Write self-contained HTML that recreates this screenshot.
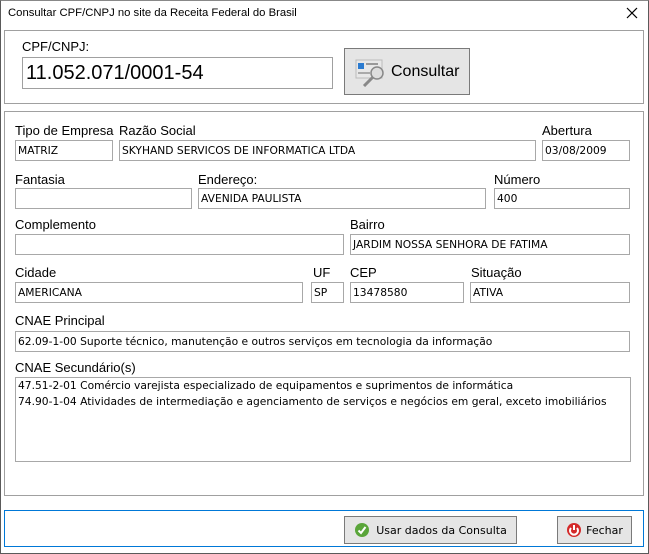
<!DOCTYPE html>
<html><head><meta charset="utf-8"><style>
*{margin:0;padding:0;box-sizing:border-box}
body{width:649px;height:554px;background:#fff;position:relative;overflow:hidden;font-family:"Liberation Sans",sans-serif;color:#000}
.win{position:absolute;left:0;top:0;width:649px;height:554px;border:1px solid #5a5a5a;border-top-color:#888}
.a{position:absolute}
.t{font-size:13px;position:absolute;white-space:nowrap}
.panel{position:absolute;border:1px solid #a0a0a0}
.f{position:absolute;border:1px solid #a8a8a8;height:21px;font-family:"DejaVu Sans",sans-serif;font-size:10.7px;line-height:19px;padding-left:2px;white-space:nowrap;overflow:hidden}
.btn{position:absolute;border:1px solid #7a7a7a;background:#e5e5e5;font-family:"DejaVu Sans",sans-serif;font-size:11px;display:flex;align-items:center;justify-content:center}
</style></head><body>
<div class="win"></div>
<div class="t" style="left:8px;top:7px;font-size:11.3px">Consultar CPF/CNPJ no site da Receita Federal do Brasil</div>
<svg class="a" style="left:626px;top:7px" width="12" height="12"><path d="M1 1L11 11M11 1L1 11" stroke="#000" stroke-width="1.2"/></svg>

<div class="panel" style="left:4px;top:30px;width:640px;height:74px"></div>
<div class="t" style="left:22px;top:39px;font-size:13px">CPF/CNPJ:</div>
<div class="a" style="left:22px;top:57px;width:311px;height:32px;border:1px solid #a0a0a0;font-size:20px;line-height:30px;padding-left:3px">11.052.071/0001-54</div>
<div class="btn" style="left:344px;top:48px;width:126px;height:47px;font-family:'Liberation Sans',sans-serif;font-size:16px;justify-content:flex-start;padding-left:10px">
<svg width="32" height="30" viewBox="0 0 32 30" style="margin-right:4px"><rect x="1" y="3" width="26" height="18" fill="#e8e8e8" stroke="#bbb"/><rect x="3" y="6" width="6" height="6" fill="#2b7bd0"/><rect x="11" y="6" width="12" height="2" fill="#999"/><rect x="3" y="15" width="12" height="2" fill="#aaa"/><circle cx="22" cy="16" r="6" fill="#ddd" stroke="#888" stroke-width="1.5"/><path d="M18 20L9 29" stroke="#888" stroke-width="3"/></svg>Consultar</div>

<div class="panel" style="left:4px;top:111px;width:640px;height:385px"></div>
<div class="t" style="left:15px;top:123px">Tipo de Empresa</div>
<div class="t" style="left:119px;top:123px">Razão Social</div>
<div class="t" style="left:542px;top:123px">Abertura</div>
<div class="f" style="left:15px;top:140px;width:98px">MATRIZ</div>
<div class="f" style="left:119px;top:140px;width:417px">SKYHAND SERVICOS DE INFORMATICA LTDA</div>
<div class="f" style="left:542px;top:140px;width:88px">03/08/2009</div>

<div class="t" style="left:15px;top:172px">Fantasia</div>
<div class="t" style="left:198px;top:172px">Endereço:</div>
<div class="t" style="left:494px;top:172px">Número</div>
<div class="f" style="left:15px;top:188px;width:177px"></div>
<div class="f" style="left:198px;top:188px;width:288px">AVENIDA PAULISTA</div>
<div class="f" style="left:494px;top:188px;width:136px">400</div>

<div class="t" style="left:15px;top:217px">Complemento</div>
<div class="t" style="left:350px;top:217px">Bairro</div>
<div class="f" style="left:15px;top:234px;width:329px"></div>
<div class="f" style="left:350px;top:234px;width:280px">JARDIM NOSSA SENHORA DE FATIMA</div>

<div class="t" style="left:15px;top:265px">Cidade</div>
<div class="t" style="left:313px;top:265px">UF</div>
<div class="t" style="left:350px;top:265px">CEP</div>
<div class="t" style="left:471px;top:265px">Situação</div>
<div class="f" style="left:15px;top:282px;width:288px">AMERICANA</div>
<div class="f" style="left:311px;top:282px;width:33px">SP</div>
<div class="f" style="left:350px;top:282px;width:114px">13478580</div>
<div class="f" style="left:470px;top:282px;width:160px">ATIVA</div>

<div class="t" style="left:15px;top:313px">CNAE Principal</div>
<div class="f" style="left:15px;top:331px;width:615px">62.09-1-00 Suporte técnico, manutenção e outros serviços em tecnologia da informação</div>

<div class="t" style="left:15px;top:360px">CNAE Secundário(s)</div>
<div class="f" style="left:15px;top:377px;width:616px;height:85px;line-height:16px;padding-top:0px;white-space:pre">47.51-2-01 Comércio varejista especializado de equipamentos e suprimentos de informática
74.90-1-04 Atividades de intermediação e agenciamento de serviços e negócios em geral, exceto imobiliários</div>

<div class="a" style="left:4px;top:510px;width:640px;height:37px;border:1px solid #0078d7"></div>
<div class="btn" style="left:344px;top:516px;width:173px;height:28px">
<svg width="16" height="16" style="margin-right:6px"><circle cx="8" cy="8" r="7" fill="#5aa53a"/><path d="M4.5 8.5L7 11L11.5 5" stroke="#fff" stroke-width="2" fill="none"/></svg>Usar dados da Consulta</div>
<div class="btn" style="left:557px;top:516px;width:75px;height:28px">
<svg width="16" height="16" style="margin-right:4px"><circle cx="8" cy="8" r="7" fill="#d42a2a"/><path d="M5 6A4 4 0 1 0 11 6" stroke="#fff" stroke-width="2" fill="none"/><path d="M8 3V8" stroke="#fff" stroke-width="2"/></svg>Fechar</div>
</body></html>
